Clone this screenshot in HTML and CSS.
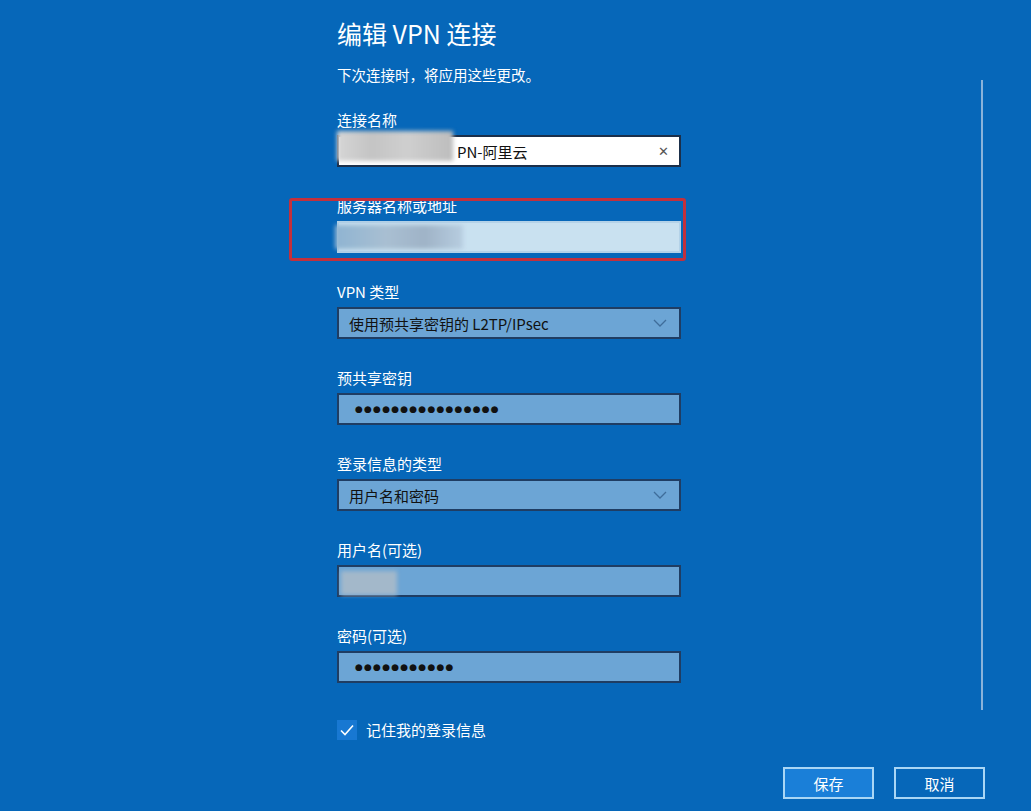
FILE: index.html
```html
<!DOCTYPE html>
<html>

<head>
    <meta charset="utf-8">
    <title>编辑 VPN 连接</title>
    <meta name="viewport" content="width=device-width, initial-scale=1">
    <link rel="stylesheet" href="styles.css">
</head>

<body>
    <div class="page">
        <div class="content">
            <form class="vpn-form">
                <h1 class="title">编辑 VPN 连接</h1>
                <p class="subtitle">下次连接时，将应用这些更改。</p>

                <div class="field">
                    <div class="label">连接名称</div>
                    <div class="box box-white">
                        <span class="blur blur-name"></span><span class="value">PN-阿里云</span>
                        <span class="clear">&#x2715;</span>
                    </div>
                </div>

                <div class="field field-marked">
                    <div class="label">服务器名称或地址</div>
                    <div class="box box-light">
                        <span class="blur blur-server"></span>
                    </div>
                    <div class="highlight"></div>
                </div>

                <div class="field">
                    <div class="label">VPN 类型</div>
                    <div class="box">
                        <span class="value">使用预共享密钥的 L2TP/IPsec</span>
                        <svg class="chevron" width="14" height="8" viewBox="0 0 14 8">
                            <path d="M1 1 L7 7 L13 1" fill="none" stroke="#3f6d9a" stroke-width="1.3" />
                        </svg>
                    </div>
                </div>

                <div class="field">
                    <div class="label">预共享密钥</div>
                    <div class="box">
                        <span class="dots">●●●●●●●●●●●●●●●●</span>
                    </div>
                </div>

                <div class="field">
                    <div class="label">登录信息的类型</div>
                    <div class="box">
                        <span class="value">用户名和密码</span>
                        <svg class="chevron" width="14" height="8" viewBox="0 0 14 8">
                            <path d="M1 1 L7 7 L13 1" fill="none" stroke="#3f6d9a" stroke-width="1.3" />
                        </svg>
                    </div>
                </div>

                <div class="field">
                    <div class="label">用户名(可选)</div>
                    <div class="box">
                        <span class="blur blur-user"></span>
                    </div>
                </div>

                <div class="field">
                    <div class="label">密码(可选)</div>
                    <div class="box">
                        <span class="dots">●●●●●●●●●●●</span>
                    </div>
                </div>

                <label class="remember">
                    <span class="checkbox">
                        <svg width="14" height="12" viewBox="0 0 14 12">
                            <path d="M1 6.5 L5 10.5 L13 1.5" fill="none" stroke="#fff" stroke-width="1.6" />
                        </svg>
                    </span>
                    记住我的登录信息
                </label>
            </form>
            <div class="scrollbar"></div>
        </div>

        <div class="footer">
            <button class="btn btn-primary" type="button">保存</button>
            <button class="btn" type="button">取消</button>
        </div>
    </div>
</body>

</html>
```

FILE: styles.css
```css
body {
    margin: 0;
    padding: 0;
    width: 1031px;
    height: 811px;
    overflow: hidden;
    background-color: #0667b9;
    color: #fff;
    font-family: "Noto Sans CJK SC", "Noto Sans", sans-serif;
}

.page {
    display: flex;
    flex-direction: column;
}

.content {
    display: flex;
    align-items: flex-start;
}

.vpn-form {
    width: 344px;
    margin-left: 337px;
    padding-top: 16px;
}

.title {
    margin: 0;
    font-size: 25px;
    line-height: 34px;
    font-weight: 400;
}

.subtitle {
    margin: 15px 0 25px;
    font-size: 14.5px;
    line-height: 20px;
}

.field {
    position: relative;
    margin-bottom: 29px;
}

.label {
    font-size: 15px;
    line-height: 20px;
    margin-bottom: 5px;
}

.box {
    position: relative;
    display: flex;
    align-items: center;
    box-sizing: border-box;
    height: 32px;
    padding: 0 10px;
    border: 2px solid #1f3d63;
    background-color: #6ca5d5;
    color: #111;
    font-size: 15px;
}

.box-white {
    background-color: #fff;
    border-color: #1b2f4a;
}

.box-light {
    background-color: #c9e1f0;
    border-color: #b4d2e8;
}

.value {
    white-space: nowrap;
}

.clear {
    margin-left: auto;
    color: #555;
    font-size: 13px;
    font-family: "DejaVu Sans", sans-serif;
}

.chevron {
    margin-left: auto;
    margin-right: 2px;
}

.dots {
    margin-left: 6px;
    font-family: "DejaVu Sans", sans-serif;
    font-size: 9px;
    letter-spacing: 1.2px;
    color: #111;
}

.blur {
    display: inline-block;
    filter: blur(2px);
}

.blur-name {
    width: 116px;
    height: 30px;
    margin: -10px 4px 0 -12px;
    background: linear-gradient(90deg, #d6d6d6, #c4c4c4 30%, #cfcfcf 60%, #bdbdbd);
}

.blur-server {
    width: 128px;
    height: 24px;
    margin-left: -14px;
    background: linear-gradient(90deg, #8fb4d2, #a9bfd2 40%, #9fb3c7 70%, #b7cde0);
}

.blur-user {
    width: 56px;
    height: 24px;
    margin: 4px 0 0 -8px;
    background-color: #a3b8ca;
}

.highlight {
    position: absolute;
    left: -48px;
    top: 2px;
    width: 397px;
    height: 63px;
    box-sizing: border-box;
    border: 3px solid #c3303c;
    border-radius: 3px;
}

.remember {
    display: flex;
    align-items: center;
    gap: 9px;
    margin-top: 37px;
    font-size: 15px;
    line-height: 20px;
}

.checkbox {
    display: flex;
    align-items: center;
    justify-content: center;
    width: 20px;
    height: 20px;
    background-color: #1878d2;
}

.scrollbar {
    width: 2px;
    height: 630px;
    margin: 80px 48px 0 auto;
    background-color: #8ab3da;
}

.footer {
    display: flex;
    justify-content: flex-end;
    gap: 20px;
    margin-top: 27px;
    padding-right: 46px;
}

.btn {
    width: 91px;
    height: 32px;
    border: 2px solid #a9d6f5;
    background-color: #0667b9;
    color: #fff;
    font-family: "Noto Sans CJK SC", sans-serif;
    font-size: 15px;
}

.btn-primary {
    background-color: #1a7fd8;
}
```
